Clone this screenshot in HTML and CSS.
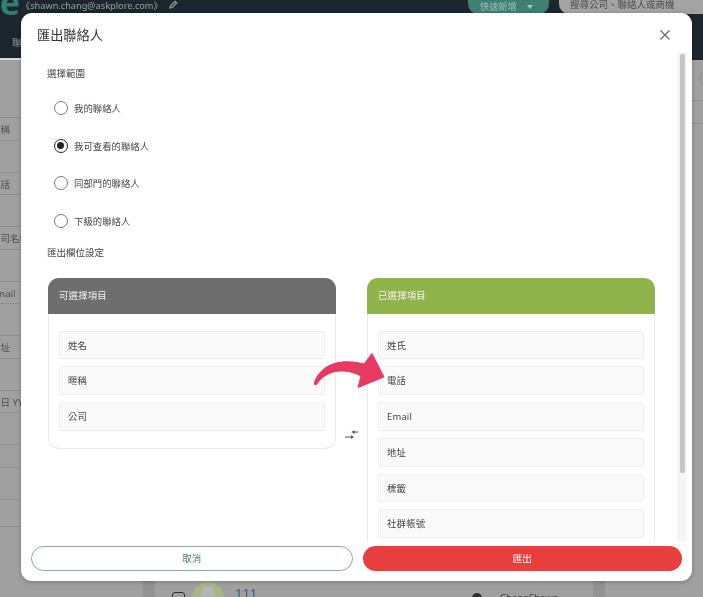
FILE: index.html
```html
<!DOCTYPE html>
<html lang="zh-Hant">
<head>
<meta charset="utf-8">
<title>匯出聯絡人</title>
<link rel="stylesheet" href="styles.css">
</head>
<body>
<div class="page">
  <header class="topbar">
    <div class="topbar-main">
      <span class="logo"><span class="logo-text">ue</span></span>
      <span class="account">《shawn.chang@askplore.com》</span>
      <svg class="pencil" width="9" height="9" viewBox="0 0 9 9"><path d="M1 8l.5-2.200L6 1.300 7.700 3 3.200 7.500z" fill="none" stroke="#9a9f9f" stroke-width="1.200"/></svg>
      <span class="quick">快速新增<i class="caret"></i></span>
      <span class="search">搜尋公司、聯絡人或商機</span>
    </div>
    <nav class="tabs"><span class="tab">聯絡人</span></nav>
  </header>
  <div class="content">
    <aside class="form-col">
      <div class="form-row">暱稱</div>
      <div class="form-row">電話</div>
      <div class="form-row">公司名稱</div>
      <div class="form-row">Email</div>
      <div class="form-row">地址</div>
      <div class="form-row">生日 YYYY</div>
      <div class="form-row"></div>
      <div class="form-row form-row-short"></div>
    </aside>
    <div class="band"></div>
    <main class="list-col">
      <div class="contact">
        <span class="check"></span>
        <span class="avatar"><i class="avatar-head"></i></span>
        <span class="contact-name">111</span>
        <span class="owner-dot"></span>
        <span class="owner">ChangShawn</span>
      </div>
    </main>
    <div class="band"></div>
    <aside class="side-col">
      <span class="side-circle"></span>
      <div class="side-row"></div>
    </aside>
  </div>

  <section class="modal">
    <div class="modal-head">
      <h1 class="modal-title">匯出聯絡人</h1>
      <svg class="close" width="10" height="10" viewBox="0 0 10 10"><path d="M.5.5l9 9M9.500.5l-9 9" stroke="#666" stroke-width="1.200" fill="none"/></svg>
    </div>
    <div class="modal-body">
      <p class="label">選擇範圍</p>
      <div class="radios">
        <div class="radio-row"><span class="radio"></span>我的聯絡人</div>
        <div class="radio-row"><span class="radio radio-on"></span>我可查看的聯絡人</div>
        <div class="radio-row"><span class="radio"></span>同部門的聯絡人</div>
        <div class="radio-row"><span class="radio"></span>下級的聯絡人</div>
      </div>
      <p class="label label-fields">匯出欄位設定</p>
      <div class="transfer">
        <div class="panel">
          <div class="panel-head panel-head-gray">可選擇項目</div>
          <div class="panel-list">
            <div class="item">姓名</div>
            <div class="item">暱稱</div>
            <div class="item">公司</div>
          </div>
        </div>
        <svg class="swap" width="16" height="12" viewBox="0 0 16 12"><path d="M14 4H10M1 9h6" fill="none" stroke="#555" stroke-width="1"/><path d="M7.500 4L10.500 2v4zM10 9L7 7v4z" fill="#555"/></svg>
        <div class="panel">
          <div class="panel-head panel-head-green">已選擇項目</div>
          <div class="panel-list">
            <div class="item">姓氏</div>
            <div class="item">電話</div>
            <div class="item">Email</div>
            <div class="item">地址</div>
            <div class="item">標籤</div>
            <div class="item">社群帳號</div>
          </div>
        </div>
      </div>
    </div>
    <div class="scrollbar"><div class="scroll-thumb"></div></div>
    <div class="modal-foot">
      <button class="btn btn-cancel">取消</button>
      <button class="btn btn-export">匯出</button>
    </div>
    <svg class="arrow" width="80" height="44" viewBox="0 0 80 44"><path d="M0 31C5 14 22 4 50 11L58 .5 70 24 44 34.500 47 23C34 16 14 14 2 32z" fill="#e63a62" stroke="#e63a62" stroke-linejoin="round" stroke-width="1"/></svg>
  </section>
</div>
</body>
</html>
```
FILE: styles.css
```css
* { box-sizing: border-box; }
html, body { margin: 0; padding: 0; height: 100%; overflow: hidden; }
body { font-family: "Noto Sans", "Noto Sans CJK TC", sans-serif; background: #a0a0a0; }
.page { position: relative; width: 703px; height: 597px; overflow: hidden; background: #a0a0a0; filter: blur(.5px); }

/* background app */
.topbar { height: 60px; background: #1b262e; overflow: hidden; }
.topbar-main { display: flex; align-items: flex-start; height: 14px; }
.logo { display: flex; justify-content: flex-end; width: 20px; height: 16px; margin-right: 1px; flex: none; overflow: hidden; }
.logo-text { margin-top: -15px; font-size: 34px; line-height: 34px; height: 34px; font-weight: 700; color: #2f7f73; white-space: nowrap; flex: none; }
.account { width: 148px; font-size: 9.200px; line-height: 14px; margin-top: -1px; color: #9a9f9f; white-space: nowrap; flex: none; }
.pencil { flex: none; }
.quick { display: flex; align-items: center; gap: 10px; margin-left: auto; width: 81px; height: 14px; padding-left: 12px; border-radius: 0 0 10px 10px; background: #3f7f74; color: #9cc0b8; font-size: 9.200px; line-height: 10px; flex: none; }
.caret { width: 0; height: 0; border: 3.500px solid transparent; border-top: 4px solid #a6c5bf; border-bottom: 0; }
.search { margin-left: 10px; width: 144px; height: 14px; padding-left: 11px; border-radius: 0 0 0 10px; background: #a3a3a3; color: #4d4d4d; font-size: 9.500px; line-height: 10px; flex: none; }
.tabs { height: 46px; padding-top: 14px; }
.tab { display: block; width: 60px; height: 32px; padding-top: 8px; padding-left: 12px; border-bottom: 2px solid #d8dcdc; color: #8c9696; font-size: 9.500px; line-height: 14px; }

.content { display: flex; height: 537px; }
.form-col { width: 143px; flex: none; padding-top: 57px; }
.form-row { height: 23.500px; margin-bottom: 31px; border-top: 1px solid #8f8f8f; border-bottom: 1px solid #8f8f8f; font-size: 9.500px; line-height: 23px; color: #4f4f4f; white-space: nowrap; text-indent: -9px; overflow: hidden; }
.form-row-short { height: 28px; }
.band { width: 12px; flex: none; background: #929292; height: 100%; }
.list-col { width: 438px; flex: none; padding-top: 522px; }
.side-col { position: relative; flex: 1; padding-top: 40px; overflow: hidden; }
.side-circle { position: absolute; left: 95px; top: 6px; width: 24px; height: 24px; border: 1px solid #8c8c8c; border-radius: 50%; }
.side-row { height: 24px; border-top: 1px solid #8f8f8f; border-bottom: 1px solid #8f8f8f; }

.contact { display: flex; align-items: flex-start; height: 20px; }
.check { width: 13px; height: 13px; margin-left: 17px; margin-top: 10px; border: 1.500px solid #303030; border-radius: 3px; flex: none; }
.avatar { position: relative; width: 32px; height: 32px; margin-left: 7px; border-radius: 50%; background: #a9b386; overflow: hidden; flex: none; }
.avatar-head { position: absolute; left: 9px; top: 4px; width: 14px; height: 15px; border-radius: 50%; background: #b4b4b4; }
.contact-name { margin-left: 11px; margin-top: .5px; width: 237px; font-size: 13px; line-height: 20px; color: #2d5a85; flex: none; }
.owner-dot { width: 10px; height: 10px; margin-top: 11px; border-radius: 50%; background: #2e2e2e; flex: none; }
.owner { margin-left: 18px; margin-top: 9px; font-size: 9.500px; line-height: 14px; color: #3d3d3d; }

/* modal */
.modal { position: absolute; left: 21px; top: 13px; width: 671px; height: 568px; display: flex; flex-direction: column; background: #fff; border-radius: 11px; box-shadow: 0 1px 4px rgba(0,0,0,.25); }
.modal-head { height: 39px; flex: none; display: flex; align-items: center; justify-content: space-between; padding: 5px 22px 0 16px; }
.modal-title { margin: 0; font-size: 13.200px; line-height: 18px; font-weight: 400; color: #333; }
.close { flex: none; }
.modal-body { flex: 1; min-height: 0; padding: 0 22px 65px 26px; overflow: hidden; }
.scrollbar { position: absolute; left: 656px; top: 39px; width: 10px; height: 489px; padding: 2px 2px 0 3px; background: #f5f5f5; }
.scroll-thumb { height: 419px; border-radius: 2px; background: #c4c4c4; }

.label { margin: 15px 0 0; font-size: 9.500px; line-height: 14px; color: #444; }
.label-fields { margin-top: 6px; margin-bottom: 18px; }
.radios { padding-top: 8px; }
.radio-row { display: flex; align-items: center; gap: 6px; height: 37.700px; padding-left: 7px; font-size: 9.400px; color: #444; }
.radio { position: relative; width: 14px; height: 14px; border: 1.200px solid #777; border-radius: 50%; flex: none; }
.radio-on { border-color: #1b262e; border-width: 1.500px; }
.radio-on::after { content: ""; position: absolute; left: 2px; top: 2px; width: 7px; height: 7px; border-radius: 50%; background: #1b262e; }

.transfer { display: flex; align-items: flex-start; margin-left: 1px; width: 607px; }
.panel { flex: none; width: 288px; }
.panel-head { height: 36px; padding-left: 11px; border-radius: 11px 11px 0 0; font-size: 9.400px; line-height: 36px; color: #f2f2f2; letter-spacing: .2px; }
.panel-head-gray { background: #6e6e6e; }
.panel-head-green { background: #90b44b; }
.panel-list { display: flex; flex-direction: column; gap: 7px; padding: 17px 10px 17.500px; border: 1px solid #e9e9e9; border-top: 0; border-radius: 0 0 11px 11px; }
.item { height: 28.700px; padding-left: 8px; background: #fafafa; border: 1px solid #eeeeee; border-radius: 3px; font-size: 9.400px; line-height: 28px; color: #444; letter-spacing: .2px; }
.swap { flex: none; width: 16px; margin: 150px 7.500px 0; }

.modal-foot { flex: none; height: 40px; display: flex; gap: 10px; padding: 5px 10px 10px; }
.btn { flex: 1; height: 25px; border-radius: 13px; font-family: inherit; font-size: 9.500px; line-height: 1; padding: 0; }
.btn-cancel { background: #fff; border: 1px solid #8aa9a6; color: #4a7f7a; }
.btn-export { background: #e83e3e; border: 0; color: #fff; }

.arrow { position: absolute; left: 293px; top: 340px; }
```
